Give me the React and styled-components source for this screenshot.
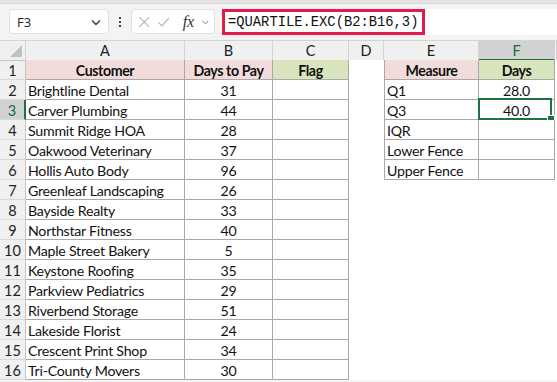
import styled, { createGlobalStyle } from "styled-components";

const Global = createGlobalStyle`
  html, body { margin: 0; padding: 0; background: #f3f3f3; }
  body { width: 557px; height: 382px; overflow: hidden; }
`;

const Pagina = styled.div`
  width: 557px;
  height: 382px;
  display: flex;
  flex-direction: column;
  font-family: Lato, "Liberation Sans", sans-serif;
`;

const BandaSuperior = styled.div`
  height: 3px;
  background: #e4e4e4;
  border-bottom: 1px solid #d6d6d6;
`;

const BarraFormula = styled.div`
  display: flex;
  height: 36px;
  padding: 5px 0 0 9px;
  box-sizing: border-box;
  align-items: flex-start;
`;

const CajaNombre = styled.div`
  width: 100px;
  height: 25px;
  box-sizing: border-box;
  background: #fff;
  border: 1px solid #e2e2e2;
  border-radius: 4px;
  display: flex;
  align-items: center;
  justify-content: space-between;
  padding: 0 6px 0 7px;
  font-family: "Open Sans", "Noto Sans", sans-serif;
  font-size: 13px;
  color: #222;
`;

const Puntos = styled.div`
  width: 22px;
  height: 25px;
  display: flex;
  flex-direction: column;
  align-items: center;
  justify-content: center;
  gap: 2px;
  & span {
    width: 2px;
    height: 2px;
    background: #444;
  }
`;

const CajaFx = styled.div`
  width: 84px;
  height: 25px;
  box-sizing: border-box;
  background: #fff;
  border: 1px solid #e2e2e2;
  border-radius: 4px;
  display: flex;
  align-items: center;
  padding: 0 4px 0 6px;
  gap: 7px;
  margin-right: 7px;
`;

const Fx = styled.span`
  font-family: "Liberation Serif", serif;
  font-style: italic;
  font-size: 16px;
  color: #333;
  margin-left: 5px;
`;

const EntradaFormula = styled.div`
  flex: 1;
  height: 26px;
  background: #fff;
  display: flex;
`;

const CajaRoja = styled.div`
  width: 203px;
  height: 26px;
  box-sizing: border-box;
  border: 3px solid #e3194b;
  display: flex;
  align-items: center;
  padding-left: 3px;
  font-family: "Liberation Mono", monospace;
  font-size: 13.8px;
  color: #111;
`;

const Hoja = styled.div`
  display: grid;
  grid-template-columns: 26px 159px 88px 76px 35px 95px 76px 1fr;
  grid-auto-rows: 20px;
  background: #fff;
`;

const Encabezado = styled.div`
  height: 21px;
  box-sizing: border-box;
  background: ${(p) => (p.$sel ? "#d2d2d2" : "#f0f0f0")};
  color: ${(p) => (p.$sel ? "#1b6b3e" : "#222")};
  border-top: 1px solid #d4d4d4;
  border-right: 1px solid #d4d4d4;
  border-bottom: ${(p) => (p.$sel ? "2px solid #1f7244" : "1px solid #c4c4c4")};
  display: flex;
  align-items: center;
  justify-content: center;
  font-size: 14.5px;
  position: relative;
`;

const Triangulo = styled.div`
  position: absolute;
  right: 3px;
  bottom: 3px;
  width: 0;
  height: 0;
  border-left: 12px solid transparent;
  border-bottom: 12px solid #c0c0c0;
`;

const NumFila = styled.div`
  box-sizing: border-box;
  background: ${(p) => (p.$sel ? "#d2d2d2" : "#f0f0f0")};
  color: ${(p) => (p.$sel ? "#1b6b3e" : "#222")};
  border-bottom: 1px solid #d8d8d8;
  border-right: ${(p) => (p.$sel ? "2px solid #1f7244" : "1px solid #c4c4c4")};
  display: flex;
  align-items: center;
  justify-content: center;
  padding-top: 1px;
  font-size: 14.5px;
`;

const Celda = styled.div`
  box-sizing: border-box;
  position: relative;
  background: ${(p) => p.$fondo || "#fff"};
  border-right: ${(p) => (p.$borde ? "1px solid #a9a9a9" : "none")};
  border-bottom: ${(p) => (p.$borde ? "1px solid #a9a9a9" : "none")};
  border-left: ${(p) => (p.$izq ? "1px solid #a9a9a9" : "none")};
  display: flex;
  align-items: center;
  justify-content: ${(p) => (p.$centro ? "center" : "flex-start")};
  padding-left: ${(p) => (p.$centro ? "0" : "2px")};
  padding-top: 1px;
  font-size: 14.2px;
  letter-spacing: ${(p) => (p.$negrita ? "-0.4px" : "-0.25px")};
  font-weight: ${(p) => (p.$negrita ? 700 : 400)};
  color: #111;
  white-space: nowrap;
`;

const Seleccion = styled.div`
  position: absolute;
  top: -2px;
  left: -1px;
  right: 2px;
  bottom: -1px;
  border: 2px solid #1f7244;
  pointer-events: none;
  &::after {
    content: "";
    position: absolute;
    right: -5px;
    bottom: -5px;
    width: 6px;
    height: 6px;
    background: #1f7244;
    border: 1px solid #fff;
  }
`;

const clientes = [
  ["Brightline Dental", 31],
  ["Carver Plumbing", 44],
  ["Summit Ridge HOA", 28],
  ["Oakwood Veterinary", 37],
  ["Hollis Auto Body", 96],
  ["Greenleaf Landscaping", 26],
  ["Bayside Realty", 33],
  ["Northstar Fitness", 40],
  ["Maple Street Bakery", 5],
  ["Keystone Roofing", 35],
  ["Parkview Pediatrics", 29],
  ["Riverbend Storage", 51],
  ["Lakeside Florist", 24],
  ["Crescent Print Shop", 34],
  ["Tri-County Movers", 30],
];

const medidas = [
  ["Q1", "28.0"],
  ["Q3", "40.0"],
  ["IQR", ""],
  ["Lower Fence", ""],
  ["Upper Fence", ""],
];

const ROSA = "#f2dcdb";
const VERDE = "#d8e4bc";

const Chevron = ({ size = 12, color = "#333" }) => (
  <svg width={size} height={size} viewBox="0 0 12 12">
    <path d="M2 4.5 L6 8.5 L10 4.5" fill="none" stroke={color} strokeWidth="1.3" />
  </svg>
);

const App = () => {
  const filas = [];
  for (let i = 0; i < 16; i++) {
    const r = i + 1;
    const c = i > 0 ? clientes[i - 1] : null;
    const m = i > 0 ? medidas[i - 1] : null;
    filas.push(
      <NumFila key={"n" + r} $sel={r === 3}>
        {r}
      </NumFila>
    );
    if (r === 1) {
      filas.push(
        <Celda key="a1" $borde $fondo={ROSA} $negrita $centro>Customer</Celda>,
        <Celda key="b1" $borde $fondo={ROSA} $negrita $centro>Days to Pay</Celda>,
        <Celda key="c1" $borde $fondo={VERDE} $negrita $centro>Flag</Celda>,
        <Celda key="d1" />,
        <Celda key="e1" $borde $izq $fondo={ROSA} $negrita $centro>Measure</Celda>,
        <Celda key="f1" $borde $fondo={VERDE} $negrita $centro>Days</Celda>,
        <Celda key="g1" />
      );
    } else {
      filas.push(
        <Celda key={"a" + r} $borde>{c[0]}</Celda>,
        <Celda key={"b" + r} $borde $centro>{c[1]}</Celda>,
        <Celda key={"c" + r} $borde />,
        <Celda key={"d" + r} />
      );
      if (m) {
        filas.push(
          <Celda key={"e" + r} $borde $izq>{m[0]}</Celda>,
          <Celda key={"f" + r} $borde $centro>
            {m[1]}
            {r === 3 && <Seleccion />}
          </Celda>
        );
      } else {
        filas.push(<Celda key={"e" + r} />, <Celda key={"f" + r} />);
      }
      filas.push(<Celda key={"g" + r} />);
    }
  }

  return (
    <Pagina>
      <Global />
      <BandaSuperior />
      <BarraFormula>
        <CajaNombre>
          F3
          <Chevron />
        </CajaNombre>
        <Puntos>
          <span />
          <span />
          <span />
        </Puntos>
        <CajaFx>
          <svg width="14" height="14" viewBox="0 0 14 14">
            <path d="M1.5 1.5 L12.5 12.5 M12.5 1.5 L1.5 12.5" stroke="#b5b5b5" strokeWidth="1.3" />
          </svg>
          <svg width="15" height="14" viewBox="0 0 15 14">
            <path d="M1.5 7.5 L5.5 11.5 L13.5 2.5" fill="none" stroke="#b5b5b5" strokeWidth="1.3" />
          </svg>
          <Fx>fx</Fx>
          <Chevron size={10} color="#777" />
        </CajaFx>
        <EntradaFormula>
          <CajaRoja>=QUARTILE.EXC(B2:B16,3)</CajaRoja>
        </EntradaFormula>
      </BarraFormula>
      <Hoja>
        <Encabezado>
          <Triangulo />
        </Encabezado>
        <Encabezado>A</Encabezado>
        <Encabezado>B</Encabezado>
        <Encabezado>C</Encabezado>
        <Encabezado>D</Encabezado>
        <Encabezado>E</Encabezado>
        <Encabezado $sel>F</Encabezado>
        <Encabezado />
        {filas}
      </Hoja>
    </Pagina>
  );
};

export default App;
